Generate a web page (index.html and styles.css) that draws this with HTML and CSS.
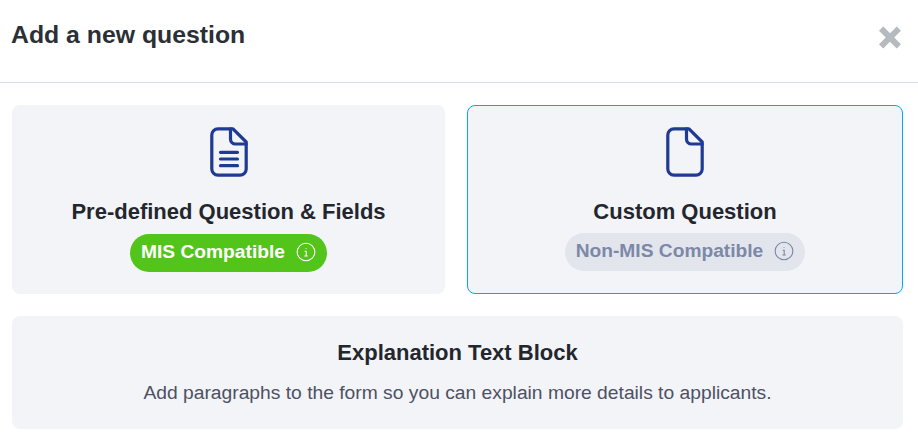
FILE: index.html
```html
<!DOCTYPE html>
<html lang="en">
<head>
<meta charset="utf-8">
<title>Add a new question</title>
<link rel="stylesheet" href="styles.css">
</head>
<body>
<header class="modal-header">
  <h1 class="modal-title">Add a new question</h1>
  <button class="close" type="button" aria-label="Close">
    <svg width="22" height="23" viewBox="0 0 22 23"><path d="M4.200 4.700 17.800 18.300M17.800 4.700 4.200 18.300" stroke="#b5babe" stroke-width="6" stroke-linecap="square" fill="none"/></svg>
  </button>
</header>
<main class="options">
  <section class="card card-left">
    <svg class="doc" width="38" height="50" viewBox="0 0 38 50" fill="none" stroke="#1f3a93" stroke-width="3.200" stroke-linejoin="round" stroke-linecap="round">
      <path d="M8 1.800H23L36.200 15V42A6.200 6.200 0 0 1 30 48.200H8A6.200 6.200 0 0 1 1.800 42V8A6.200 6.200 0 0 1 8 1.800Z"/>
      <path d="M20.500 1.800V12A5 5 0 0 0 25.500 17H36.200"/>
      <path d="M10.500 25.300H27.500M10.500 32H27.500M10.500 38.700H27.500"/>
    </svg>
    <h2 class="card-title">Pre-defined Question &amp; Fields</h2>
    <div class="pill pill-green">MIS Compatible
      <svg class="info" width="20" height="20" viewBox="0 0 20 20" fill="none" stroke="currentColor"><circle cx="10" cy="10" r="8.800" stroke-width="1.100"/><path d="M10 6.200V6.900M8.600 9.200H10.200V14M8.400 14H11.800" stroke-width="1.100"/></svg>
    </div>
  </section>
  <section class="card card-right">
    <svg class="doc" width="38" height="50" viewBox="0 0 38 50" fill="none" stroke="#1f3a93" stroke-width="3.200" stroke-linejoin="round" stroke-linecap="round">
      <path d="M8 1.800H23L36.200 15V42A6.200 6.200 0 0 1 30 48.200H8A6.200 6.200 0 0 1 1.800 42V8A6.200 6.200 0 0 1 8 1.800Z"/>
      <path d="M20.500 1.800V12A5 5 0 0 0 25.500 17H36.200"/>
    </svg>
    <h2 class="card-title">Custom Question</h2>
    <div class="pill pill-grey">Non-MIS Compatible
      <svg class="info" width="20" height="20" viewBox="0 0 20 20" fill="none" stroke="currentColor"><circle cx="10" cy="10" r="8.800" stroke-width="1.100"/><path d="M10 6.200V6.900M8.600 9.200H10.200V14M8.400 14H11.800" stroke-width="1.100"/></svg>
    </div>
  </section>
  <section class="card card-wide">
    <h2 class="card-title">Explanation Text Block</h2>
    <p class="card-text">Add paragraphs to the form so you can explain more details to applicants.</p>
  </section>
</main>
</body>
</html>
```

FILE: styles.css
```css
* { box-sizing: border-box; }
html, body { margin: 0; padding: 0; background: #fff; }
body { font-family: "Liberation Sans", Arial, sans-serif; color: #212529; width: 918px; height: 445px; overflow: hidden; }
.modal-header { height: 83px; border-bottom: 1px solid #d6e4ea; display: flex; justify-content: space-between; align-items: flex-start; padding: 0 17px 0 11px; }
.modal-title { margin: 20px 0 0; font-size: 24.800px; line-height: 29px; font-weight: 700; color: #2b2f36; }
.close { background: none; border: 0; padding: 0; margin: 26px 0 0; width: 22px; height: 23px; display: block; }
.close svg { display: block; }
.options { display: grid; grid-template-columns: 433px 436px; gap: 22px; padding: 22px 15px 0 12px; }
.card { background: #f3f4f8; border-radius: 8px; display: flex; flex-direction: column; align-items: center; }
.card-left, .card-right { height: 189px; padding-top: 22px; }
.card-right { border: 1px solid #00a8fa; padding-top: 21px; }
.card-wide { grid-column: 1 / 3; height: 113px; padding-top: 25px; }
.doc { display: block; margin-bottom: 23px; }
.card-title { margin: 0; font-size: 22px; line-height: 24px; font-weight: 700; color: #23262d; }
.pill { display: flex; align-items: center; gap: 11px; height: 38px; margin-top: 10px; padding: 0 11px 2px; border-radius: 19px; font-size: 19.200px; font-weight: 700; }
.pill-green { background: #52c41a; color: #fff; }
.pill-grey { background: #e3e5ec; color: #7c88a8; margin-top: 9px; }
.info { display: block; }
.card-text { margin: 17px 0 0; font-size: 19.250px; line-height: 22px; color: #4d5163; }
```
